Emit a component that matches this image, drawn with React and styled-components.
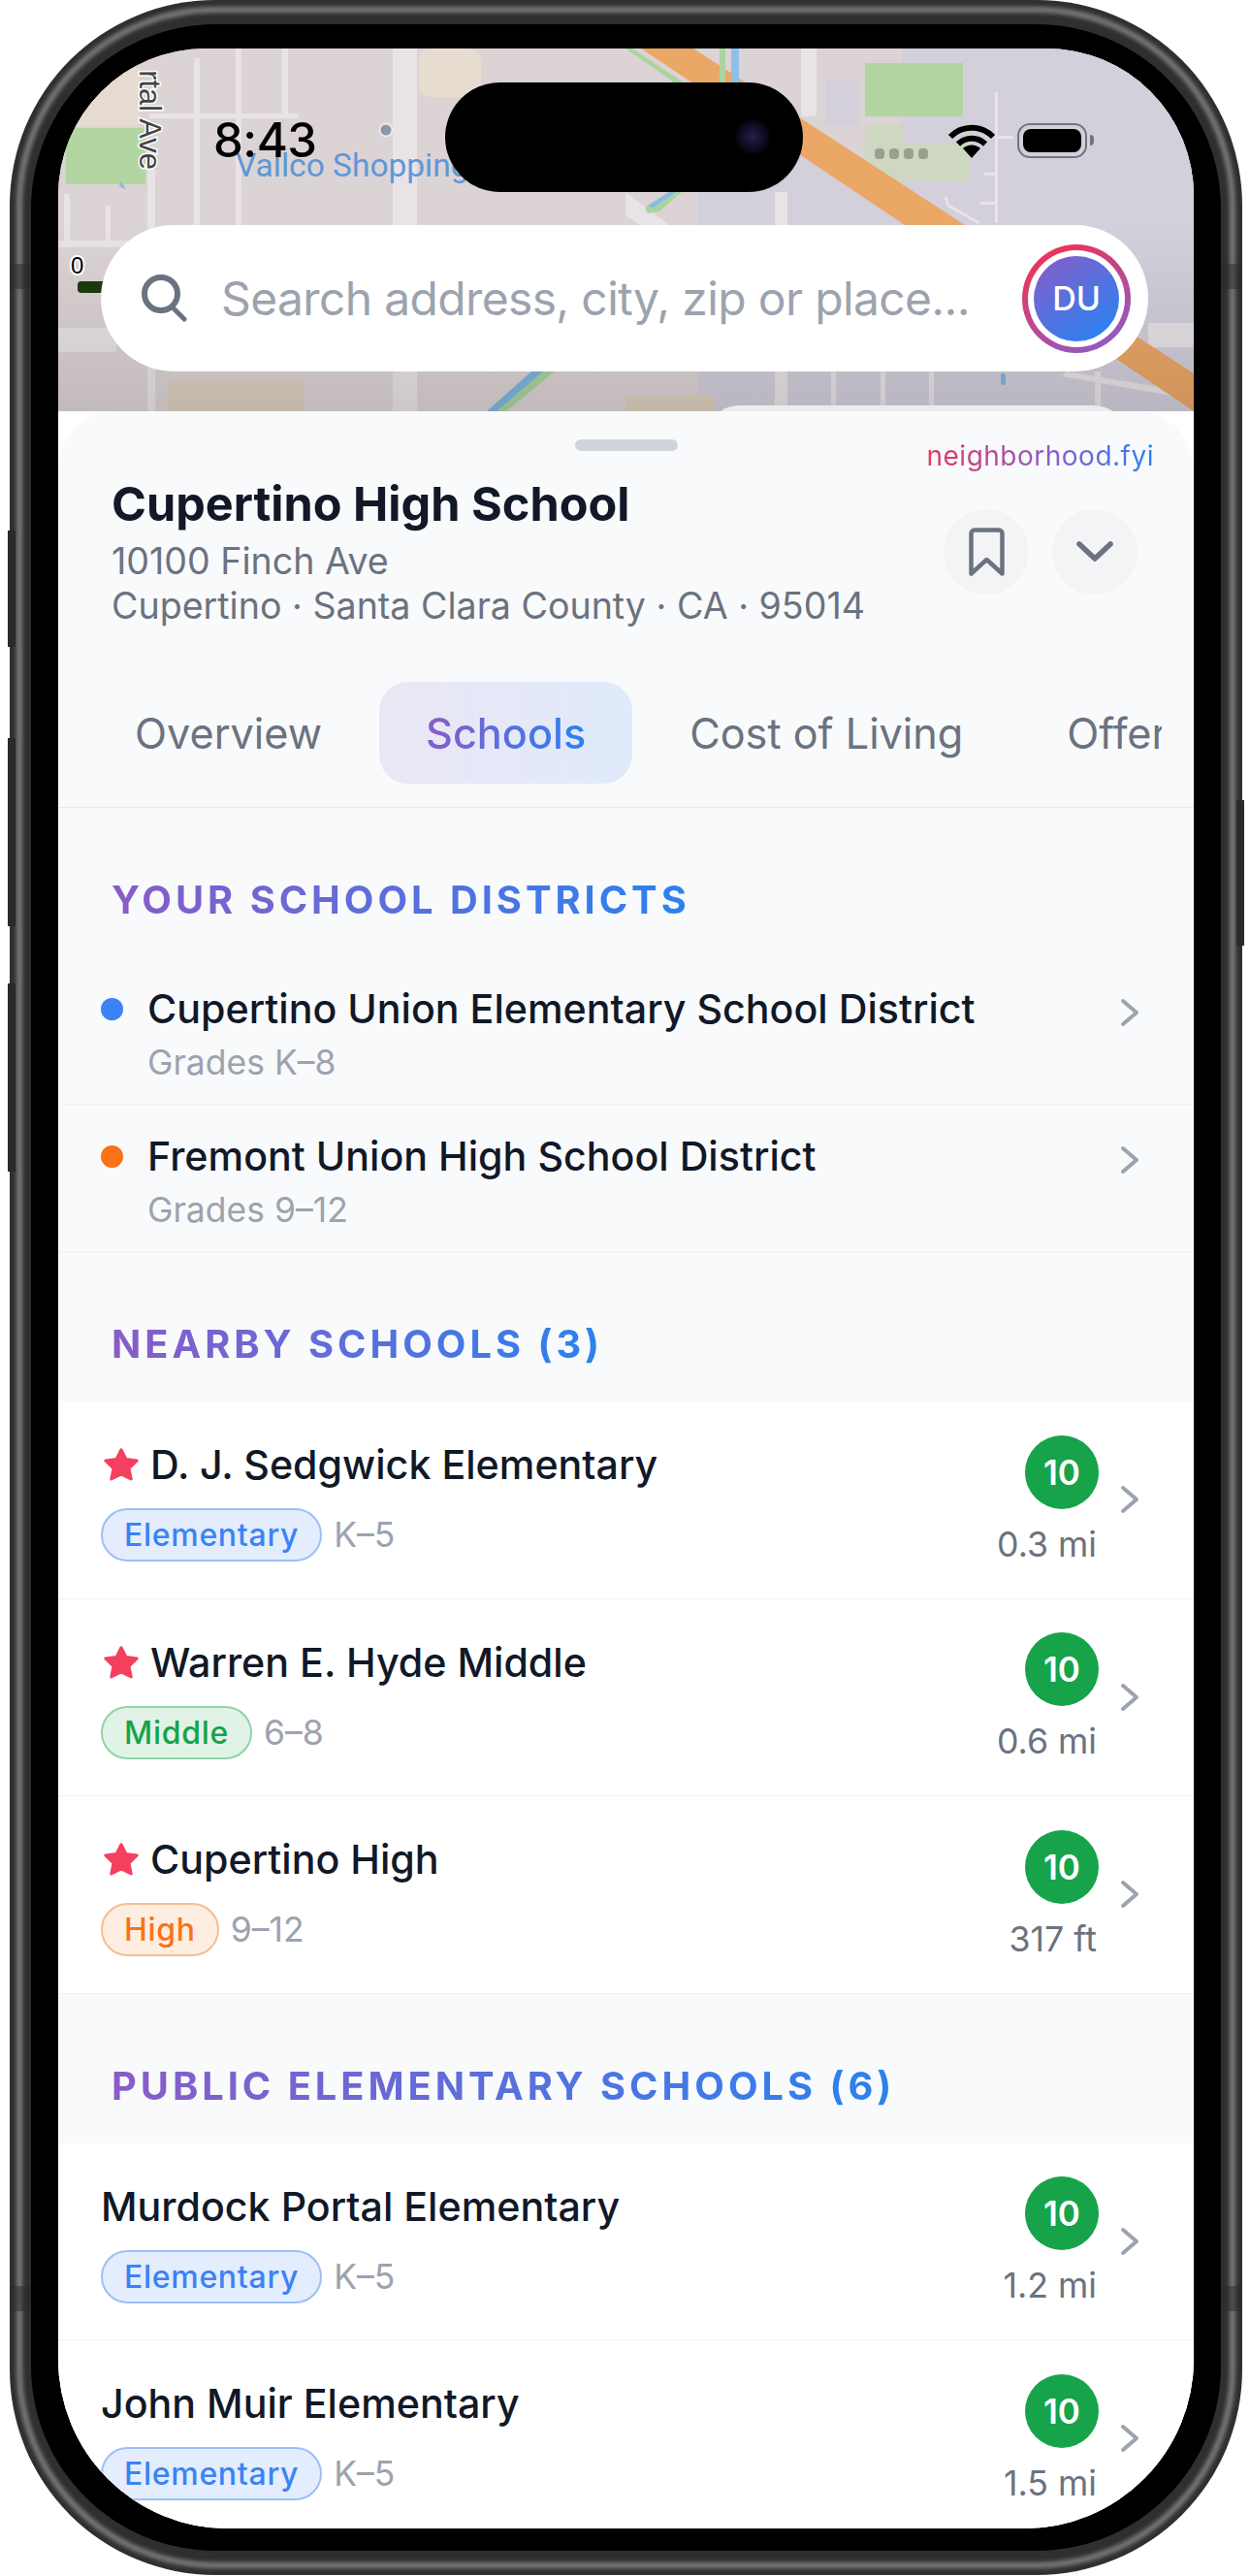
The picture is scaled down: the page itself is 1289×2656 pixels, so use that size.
import React from "react";
import styled, { createGlobalStyle } from "styled-components";

const GlobalStyle = createGlobalStyle`
  html, body {
    margin: 0;
    padding: 0;
    background: #ffffff;
  }
  body {
    font-family: "Inter", "Noto Sans", sans-serif;
  }
`;

const Page = styled.div`
  width: 1289px;
  height: 2656px;
  padding: 0 8px 0 10px;
  box-sizing: border-box;
  overflow: hidden;
`;

const PhoneRim = styled.div`
  position: relative;
  height: 2655px;
  padding: 25px 22px;
  box-sizing: border-box;
  border-radius: 212px;
  background: #2f2f2f;

  &::before {
    content: "";
    position: absolute;
    inset: 7px;
    border: 6px solid #7a7a7a;
    border-radius: 205px;
    filter: blur(2px);
  }
`;

const RimMark = styled.div`
  position: absolute;
  top: ${(props) => props.$top}px;
  height: ${(props) => props.$height}px;
  ${(props) => props.$side}: ${(props) => (props.$band ? 0 : -2)}px;
  width: ${(props) => (props.$band ? 22 : 8)}px;
  background: #2a2a2a;
  opacity: ${(props) => (props.$band ? 0.5 : 1)};
`;

const Bezel = styled.div`
  position: relative;
  height: 100%;
  padding: 25px 28px 23px;
  box-sizing: border-box;
  border-radius: 190px;
  background: #000000;
`;

const Screen = styled.div`
  position: relative;
  height: 100%;
  border-radius: 152px 152px 175px 175px;
  overflow: hidden;
  background: #ffffff;
`;

const Island = styled.div`
  position: absolute;
  top: 35px;
  left: 399px;
  width: 369px;
  height: 113px;
  border-radius: 57px;
  background: #000000;
  z-index: 3;
`;

const Lens = styled.div`
  position: absolute;
  top: 38px;
  right: 34px;
  width: 36px;
  height: 36px;
  border-radius: 50%;
  background: radial-gradient(circle, #25204a 0%, #100d24 45%, #030306 75%);
`;

const MapArea = styled.div`
  position: relative;
  height: 374px;
  padding-top: 70px;
  box-sizing: border-box;
`;

const MapCanvas = styled.svg`
  position: absolute;
  top: 0;
  left: 0;
  width: 1171px;
  height: 374px;
`;

const StatusBar = styled.div`
  position: relative;
  display: flex;
  align-items: center;
  justify-content: space-between;
  height: 50px;
  padding: 0 110px 0 160px;
`;

const Time = styled.span`
  font-size: 49px;
  line-height: 50px;
  font-weight: 500;
  letter-spacing: -0.5px;
  color: #000000;
`;

const StatusIcons = styled.div`
  display: flex;
  align-items: center;
`;

const SignalDots = styled.div`
  display: flex;
  gap: 5px;
  margin: 26px 20px 0 0;
`;

const SignalDot = styled.span`
  width: 10px;
  height: 11px;
  border-radius: 4px;
  background: #9aa08e;
`;

const Battery = styled.div`
  position: relative;
  width: 72px;
  height: 36px;
  margin-left: 22px;
  padding: 4px;
  box-sizing: border-box;
  border: 2px solid #74747c;
  border-radius: 13px;

  &::before {
    content: "";
    display: block;
    height: 100%;
    border-radius: 8px;
    background: #000000;
  }

  &::after {
    content: "";
    position: absolute;
    top: 10px;
    right: -9px;
    width: 4px;
    height: 11px;
    border-radius: 0 4px 4px 0;
    background: #74747c;
  }
`;

const SearchBar = styled.div`
  position: relative;
  display: flex;
  align-items: center;
  height: 151px;
  margin: 62px 47px 0 44px;
  padding: 0 18px 0 42px;
  border-radius: 76px;
  background: #ffffff;
  z-index: 1;
`;

const SearchText = styled.span`
  flex: 1;
  margin-left: 35px;
  font-size: 48px;
  line-height: 60px;
  letter-spacing: -0.65px;
  color: #9ca3af;
  white-space: nowrap;
`;

const AvatarRing = styled.div`
  display: flex;
  align-items: center;
  justify-content: center;
  width: 112px;
  height: 112px;
  padding: 6px;
  box-sizing: border-box;
  border-radius: 50%;
  background: linear-gradient(150deg, #e8365d 15%, #8f5bc4 90%);
`;

const AvatarGap = styled.div`
  display: flex;
  align-items: center;
  justify-content: center;
  width: 100%;
  height: 100%;
  border-radius: 50%;
  background: #ffffff;
`;

const Avatar = styled.div`
  display: flex;
  align-items: center;
  justify-content: center;
  width: 88px;
  height: 88px;
  border-radius: 50%;
  background: linear-gradient(145deg, #8a5cc8 0%, #2a82f0 90%);
  font-size: 34px;
  font-weight: 500;
  color: #ffffff;
`;

const Sheet = styled.div`
  position: relative;
  border-radius: 60px 60px 0 0;
  background: #f9fafb;
`;

const Handle = styled.div`
  width: 106px;
  height: 12px;
  margin: 0 auto;
  position: relative;
  top: 29px;
  border-radius: 6px;
  background: #d1d5db;
`;

const gradientText = `
  display: inline-block;
  background: linear-gradient(90deg, #8a5cc8, #2a82f0);
  -webkit-background-clip: text;
  background-clip: text;
  color: transparent;
`;

const Brand = styled.span`
  position: absolute;
  top: 28px;
  right: 41px;
  font-size: 28px;
  line-height: 36px;
  letter-spacing: 0.5px;
  display: inline-block;
  background: linear-gradient(90deg, #e8365d 0%, #8a5cc8 55%, #2a82f0 100%);
  -webkit-background-clip: text;
  background-clip: text;
  color: transparent;
`;

const PlaceHeader = styled.div`
  display: flex;
  align-items: center;
  justify-content: space-between;
  padding: 53.5px 58px 0 55px;
`;

const PlaceTitle = styled.h1`
  margin: 0 0 6px;
  font-size: 48.6px;
  line-height: 60px;
  font-weight: 700;
  color: #111827;
`;

const PlaceLine = styled.div`
  font-size: 37.6px;
  line-height: 46px;
  color: #6b7280;
`;

const Actions = styled.div`
  display: flex;
  gap: 24px;
`;

const RoundButton = styled.button`
  display: flex;
  align-items: center;
  justify-content: center;
  width: 88px;
  height: 88px;
  padding: 0;
  border: none;
  border-radius: 50%;
  background: #f3f4f6;
`;

const TabBar = styled.div`
  margin-top: 55.5px;
  padding: 0 33px 24px 31px;
  border-bottom: 1px solid #e8eaed;
`;

const TabScroller = styled.div`
  display: flex;
  gap: 11px;
  overflow: hidden;
`;

const Tab = styled.div`
  flex: none;
  display: flex;
  align-items: center;
  height: 105px;
  padding: 0 48px;
  border-radius: 30px;
  font-size: 43.2px;
  background: ${(props) =>
    props.$active ? "linear-gradient(90deg, #ebe7f5, #dfeafb)" : "transparent"};
  color: #6b7280;
  font-weight: ${(props) => (props.$active ? 500 : 400)};
`;

const ActiveTabLabel = styled.span`
  ${gradientText}
`;

const SectionHead = styled.div`
  display: flex;
  padding: 72px 55px 36px;
`;

const SectionTitle = styled.h2`
  ${gradientText}
  margin: 0;
  font-size: 39.8px;
  line-height: 46px;
  font-weight: 700;
  letter-spacing: 3.98px;
`;

const DistrictRow = styled.div`
  display: flex;
  justify-content: space-between;
  height: 122px;
  padding: 29px 55px 0 44px;
  border-bottom: 1px solid #f0f1f3;
`;

const DistrictName = styled.div`
  display: flex;
  align-items: center;
  gap: 25px;
  font-size: 41.2px;
  line-height: 48px;
  font-weight: 500;
  color: #111827;
`;

const Dot = styled.span`
  width: 23px;
  height: 23px;
  border-radius: 50%;
  background: ${(props) => props.$color};
`;

const DistrictGrades = styled.div`
  margin: 11px 0 0 48px;
  font-size: 35.5px;
  line-height: 42px;
  color: #9ca3af;
`;

const Chevron = styled.svg`
  flex: none;
  margin-top: ${(props) => props.$top || 0}px;
`;

const SchoolList = styled.div`
  background: #ffffff;
`;

const SchoolRow = styled.div`
  display: flex;
  align-items: center;
  justify-content: space-between;
  height: 203.5px;
  padding: 0 55px 0 44px;
  box-sizing: border-box;
  border-bottom: 1px solid #f0f1f3;
`;

const SchoolInfo = styled.div`
  display: flex;
  flex-direction: column;
  gap: 21px;
  padding-top: 4px;
`;

const SchoolName = styled.div`
  display: flex;
  align-items: center;
  gap: 12px;
  padding-left: ${(props) => (props.$starred ? 3 : 0)}px;
  font-size: 41.2px;
  line-height: 48px;
  font-weight: 500;
  color: #111827;
`;

const SchoolMeta = styled.div`
  display: flex;
  align-items: center;
  gap: 12px;
`;

const badgeColors = {
  Elementary: { bg: "#e3edfd", line: "#9dbff5", text: "#3b82f6" },
  Middle: { bg: "#e1f3e7", line: "#90d3a6", text: "#16a34a" },
  High: { bg: "#fdeee1", line: "#f6bd8f", text: "#f97316" },
};

const LevelBadge = styled.span`
  display: flex;
  align-items: center;
  height: 55px;
  padding: 0 22px;
  box-sizing: border-box;
  border-radius: 28px;
  border: 2.5px solid ${(props) => badgeColors[props.$level].line};
  background: ${(props) => badgeColors[props.$level].bg};
  color: ${(props) => badgeColors[props.$level].text};
  font-size: 32px;
  font-weight: 500;
  letter-spacing: 0.7px;
`;

const GradeRange = styled.span`
  font-size: 35.5px;
  color: #9ca3af;
`;

const SchoolSide = styled.div`
  display: flex;
  align-items: center;
  gap: 21px;
`;

const ScoreColumn = styled.div`
  display: flex;
  flex-direction: column;
  align-items: flex-end;
  gap: 15px;
`;

const Score = styled.div`
  display: flex;
  align-items: center;
  justify-content: center;
  width: 76px;
  height: 76px;
  border-radius: 50%;
  background: #16a34a;
  color: #ffffff;
  font-size: 35px;
  font-weight: 600;
`;

const Distance = styled.div`
  padding-right: 2px;
  font-size: 35.7px;
  line-height: 42px;
  color: #6b7280;
`;

const MapDrawing = () => (
  <MapCanvas viewBox="60 50 1171 374">
    <rect x="60" y="50" width="1171" height="374" fill="#dcd3d4" />
    {/* lavender block east of the freeway */}
    <polygon points="930,50 1231,50 1231,424 720,424 720,170" fill="#d3cfdb" />
    <polygon points="715,50 930,50 930,190" fill="#dcd3d4" />
    <polygon points="60,70 144,70 144,130 60,130" fill="#e6dbd0" />
    <rect x="432" y="50" width="64" height="50" rx="12" fill="#e6ddd0" />
    <rect x="68" y="132" width="82" height="58" fill="#b1d6a2" />
    <rect x="892" y="65" width="101" height="55" fill="#b1d6a2" />
    <rect x="892" y="128" width="107" height="60" fill="#cdd7c2" />
    <rect x="931" y="120" width="64" height="27" fill="#d3cfdb" />
    <rect x="851" y="83" width="35" height="47" fill="#d3cfdb" />
    <rect x="173" y="393" width="140" height="31" fill="#ddd1bf" />
    <rect x="645" y="408" width="92" height="16" fill="#ddd1bf" />

    {/* local streets */}
    <g fill="#e8e3e6">
      <rect x="405" y="50" width="25" height="374" />
      <rect x="200" y="60" width="6" height="172" />
      <rect x="243" y="50" width="6" height="182" />
      <rect x="291" y="50" width="6" height="72" />
      <rect x="154" y="117" width="154" height="5" />
      <rect x="152" y="175" width="8" height="249" />
      <rect x="66" y="200" width="6" height="48" />
      <rect x="109" y="212" width="5" height="36" />
      <rect x="60" y="248" width="95" height="7" />
      <rect x="60" y="338" width="60" height="25" />
      <rect x="826" y="50" width="16" height="70" />
      <rect x="799" y="198" width="13" height="226" />
      <rect x="1184" y="333" width="47" height="25" />
      <rect x="857" y="383" width="5" height="41" />
      <rect x="908" y="383" width="5" height="41" />
      <rect x="958" y="383" width="5" height="41" />
      <rect x="1129" y="383" width="6" height="41" />
      <rect x="1026" y="95" width="3" height="135" />
      <rect x="1027" y="140" width="18" height="3" />
      <rect x="1015" y="178" width="14" height="3" />
      <rect x="1010" y="208" width="18" height="3" />
      <polygon points="645,198 690,232 660,232 645,222" />
      <polygon points="1100,383 1231,405 1231,412 1095,388" />
    </g>
    <polyline
      points="975,203 978,212 1010,230"
      fill="none"
      stroke="#e8e3e6"
      strokeWidth="3"
    />

    {/* freeway and creek */}
    <polygon
      points="661,50 715,50 995,232 1231,385 1231,424 1151,370 933,232"
      fill="#eba766"
    />
    <polygon points="645,50 652,50 705,85 695,85" fill="#a9d4a0" />
    <rect x="754" y="50" width="8" height="35" fill="#8fc0e8" />
    <rect x="742" y="50" width="6" height="35" fill="#a9d4a0" />
    <polygon points="665,214 690,198 703,198 680,218 668,220" fill="#a9d4a0" />
    <polygon points="668,212 690,198 697,198 674,214" fill="#84bde6" />
    <polygon points="560,383 572,383 522,424 506,424" fill="#a9d4a0" />
    <polygon points="548,383 560,383 512,424 502,424" fill="#7fb7e2" />
    <rect x="1032" y="385" width="5" height="12" rx="2" fill="#7fb7e2" />

    <rect x="60" y="232" width="1171" height="192" fill="url(#mapShade)" />
    <defs>
      <linearGradient id="mapShade" x1="0" y1="0" x2="0" y2="1">
        <stop offset="0" stopColor="#000000" stopOpacity="0" />
        <stop offset="1" stopColor="#000000" stopOpacity="0.12" />
      </linearGradient>
    </defs>

    {/* card peeking behind the sheet */}
    <rect x="735" y="418" width="420" height="40" rx="28" fill="#efebeb" />

    {/* labels */}
    <text
      x="243"
      y="182"
      fontFamily="Roboto, sans-serif"
      fontSize="33.5"
      fill="#5c98d9"
    >
      Vallco Shopping
    </text>
    <text
      transform="translate(144 175) rotate(90)"
      textAnchor="end"
      fontFamily="Liberation Sans, sans-serif"
      fontSize="31"
      fill="#444444"
      stroke="#ffffff"
      strokeWidth="3"
      paintOrder="stroke"
    >
      rtal Ave
    </text>
    <circle cx="398" cy="134" r="6.5" fill="#8a96ab" stroke="#eee9ec" strokeWidth="2" />
    <path d="M125 186 l5 10 l-7 -4 z" fill="#8fb8e0" />

    {/* scale bar */}
    <text
      x="73"
      y="282"
      fontFamily="Liberation Sans, sans-serif"
      fontSize="24"
      fill="#000000"
      stroke="#ffffff"
      strokeWidth="4"
      paintOrder="stroke"
    >
      0
    </text>
    <rect x="80" y="290" width="40" height="12" rx="4" fill="#19390f" />
  </MapCanvas>
);

const SearchIcon = () => (
  <svg width="47" height="49" viewBox="0 0 47 49" fill="none" stroke="#6b7280">
    <circle cx="20" cy="20" r="17" strokeWidth="6" />
    <path d="M32 34 L44 46" strokeWidth="5" strokeLinecap="round" />
  </svg>
);

const WifiIcon = () => (
  <svg width="50" height="35" viewBox="0 0 50 35" fill="none">
    <path d="M3 13 A31 31 0 0 1 47 13" stroke="#000" strokeWidth="6" />
    <path d="M11 20.5 A20 20 0 0 1 39 20.5" stroke="#000" strokeWidth="6" />
    <path d="M25 35 L16 25 A13 13 0 0 1 34 25 Z" fill="#000" />
  </svg>
);

const BookmarkIcon = () => (
  <svg width="37" height="50" viewBox="0 0 37 50" fill="none">
    <path
      d="M2.5 47.5 V6 A3.5 3.5 0 0 1 6 2.5 H31 A3.5 3.5 0 0 1 34.5 6 V47.5 L18.5 33 Z"
      stroke="#6b7280"
      strokeWidth="4.5"
      strokeLinejoin="round"
    />
  </svg>
);

const ChevronDownIcon = () => (
  <svg width="38" height="21" viewBox="0 0 38 21" fill="none">
    <path
      d="M3 3 L19 18 L35 3"
      stroke="#6b7280"
      strokeWidth="5.5"
      strokeLinecap="round"
      strokeLinejoin="round"
    />
  </svg>
);

const ChevronRight = ({ top }) => (
  <Chevron $top={top} width="22" height="32" viewBox="0 0 22 32" fill="none">
    <path
      d="M4 4 L18 16 L4 28"
      stroke="#9ca3af"
      strokeWidth="4"
      strokeLinecap="round"
      strokeLinejoin="round"
    />
  </Chevron>
);

const StarIcon = () => (
  <svg width="36" height="34" viewBox="0 0 36 34">
    <polygon
      points="18,1.8 23,11.6 34.2,13 26,21 28.2,32 18,27 7.8,32 10,21 1.8,13 13,11.6"
      fill="#f43f5e"
      stroke="#f43f5e"
      strokeWidth="3"
      strokeLinejoin="round"
    />
  </svg>
);

const tabs = ["Overview", "Schools", "Cost of Living", "Offers"];

const districts = [
  {
    name: "Cupertino Union Elementary School District",
    grades: "Grades K–8",
    color: "#3b82f6",
  },
  {
    name: "Fremont Union High School District",
    grades: "Grades 9–12",
    color: "#f97316",
  },
];

const nearbySchools = [
  { name: "D. J. Sedgwick Elementary", level: "Elementary", range: "K–5", dist: "0.3 mi" },
  { name: "Warren E. Hyde Middle", level: "Middle", range: "6–8", dist: "0.6 mi" },
  { name: "Cupertino High", level: "High", range: "9–12", dist: "317 ft" },
];

const publicSchools = [
  { name: "Murdock Portal Elementary", level: "Elementary", range: "K–5", dist: "1.2 mi" },
  { name: "John Muir Elementary", level: "Elementary", range: "K–5", dist: "1.5 mi" },
];

const School = ({ school, starred }) => (
  <SchoolRow>
    <SchoolInfo>
      <SchoolName $starred={starred}>
        {starred && <StarIcon />}
        {school.name}
      </SchoolName>
      <SchoolMeta>
        <LevelBadge $level={school.level}>{school.level}</LevelBadge>
        <GradeRange>{school.range}</GradeRange>
      </SchoolMeta>
    </SchoolInfo>
    <SchoolSide>
      <ScoreColumn>
        <Score>10</Score>
        <Distance>{school.dist}</Distance>
      </ScoreColumn>
      <ChevronRight />
    </SchoolSide>
  </SchoolRow>
);

const App = () => {
  return (
    <Page>
      <GlobalStyle />
      <PhoneRim>
        {/* side buttons and antenna bands */}
        <RimMark $side="left" $top={547} $height={120} />
        <RimMark $side="left" $top={761} $height={194} />
        <RimMark $side="left" $top={1014} $height={194} />
        <RimMark $side="right" $top={825} $height={150} />
        <RimMark $side="left" $top={272} $height={26} $band />
        <RimMark $side="right" $top={272} $height={26} $band />
        <RimMark $side="left" $top={2357} $height={26} $band />
        <RimMark $side="right" $top={2357} $height={26} $band />
        <Bezel>
          <Screen>
            <MapArea>
              <MapDrawing />
              <StatusBar>
                <Time>8:43</Time>
                <StatusIcons>
                  <SignalDots>
                    <SignalDot />
                    <SignalDot />
                    <SignalDot />
                    <SignalDot />
                  </SignalDots>
                  <WifiIcon />
                  <Battery />
                </StatusIcons>
              </StatusBar>
              <SearchBar>
                <SearchIcon />
                <SearchText>Search address, city, zip or place...</SearchText>
                <AvatarRing>
                  <AvatarGap>
                    <Avatar>DU</Avatar>
                  </AvatarGap>
                </AvatarRing>
              </SearchBar>
            </MapArea>

            <Sheet>
              <Handle />
              <Brand>neighborhood.fyi</Brand>
              <PlaceHeader>
                <div>
                  <PlaceTitle>Cupertino High School</PlaceTitle>
                  <PlaceLine>10100 Finch Ave</PlaceLine>
                  <PlaceLine>Cupertino · Santa Clara County · CA · 95014</PlaceLine>
                </div>
                <Actions>
                  <RoundButton>
                    <BookmarkIcon />
                  </RoundButton>
                  <RoundButton>
                    <ChevronDownIcon />
                  </RoundButton>
                </Actions>
              </PlaceHeader>

              <TabBar>
                <TabScroller>
                  {tabs.map((tab) => (
                    <Tab key={tab} $active={tab === "Schools"}>
                      {tab === "Schools" ? <ActiveTabLabel>{tab}</ActiveTabLabel> : tab}
                    </Tab>
                  ))}
                </TabScroller>
              </TabBar>

              <SectionHead>
                <SectionTitle>YOUR SCHOOL DISTRICTS</SectionTitle>
              </SectionHead>
              {districts.map((district) => (
                <DistrictRow key={district.name}>
                  <div>
                    <DistrictName>
                      <Dot $color={district.color} />
                      {district.name}
                    </DistrictName>
                    <DistrictGrades>{district.grades}</DistrictGrades>
                  </div>
                  <ChevronRight top={12} />
                </DistrictRow>
              ))}

              <SectionHead>
                <SectionTitle>NEARBY SCHOOLS (3)</SectionTitle>
              </SectionHead>
              <SchoolList>
                {nearbySchools.map((school) => (
                  <School key={school.name} school={school} starred />
                ))}
              </SchoolList>

              <SectionHead>
                <SectionTitle>PUBLIC ELEMENTARY SCHOOLS (6)</SectionTitle>
              </SectionHead>
              <SchoolList>
                {publicSchools.map((school) => (
                  <School key={school.name} school={school} />
                ))}
              </SchoolList>
            </Sheet>

            <Island>
              <Lens />
            </Island>
          </Screen>
        </Bezel>
      </PhoneRim>
    </Page>
  );
};

export default App;
